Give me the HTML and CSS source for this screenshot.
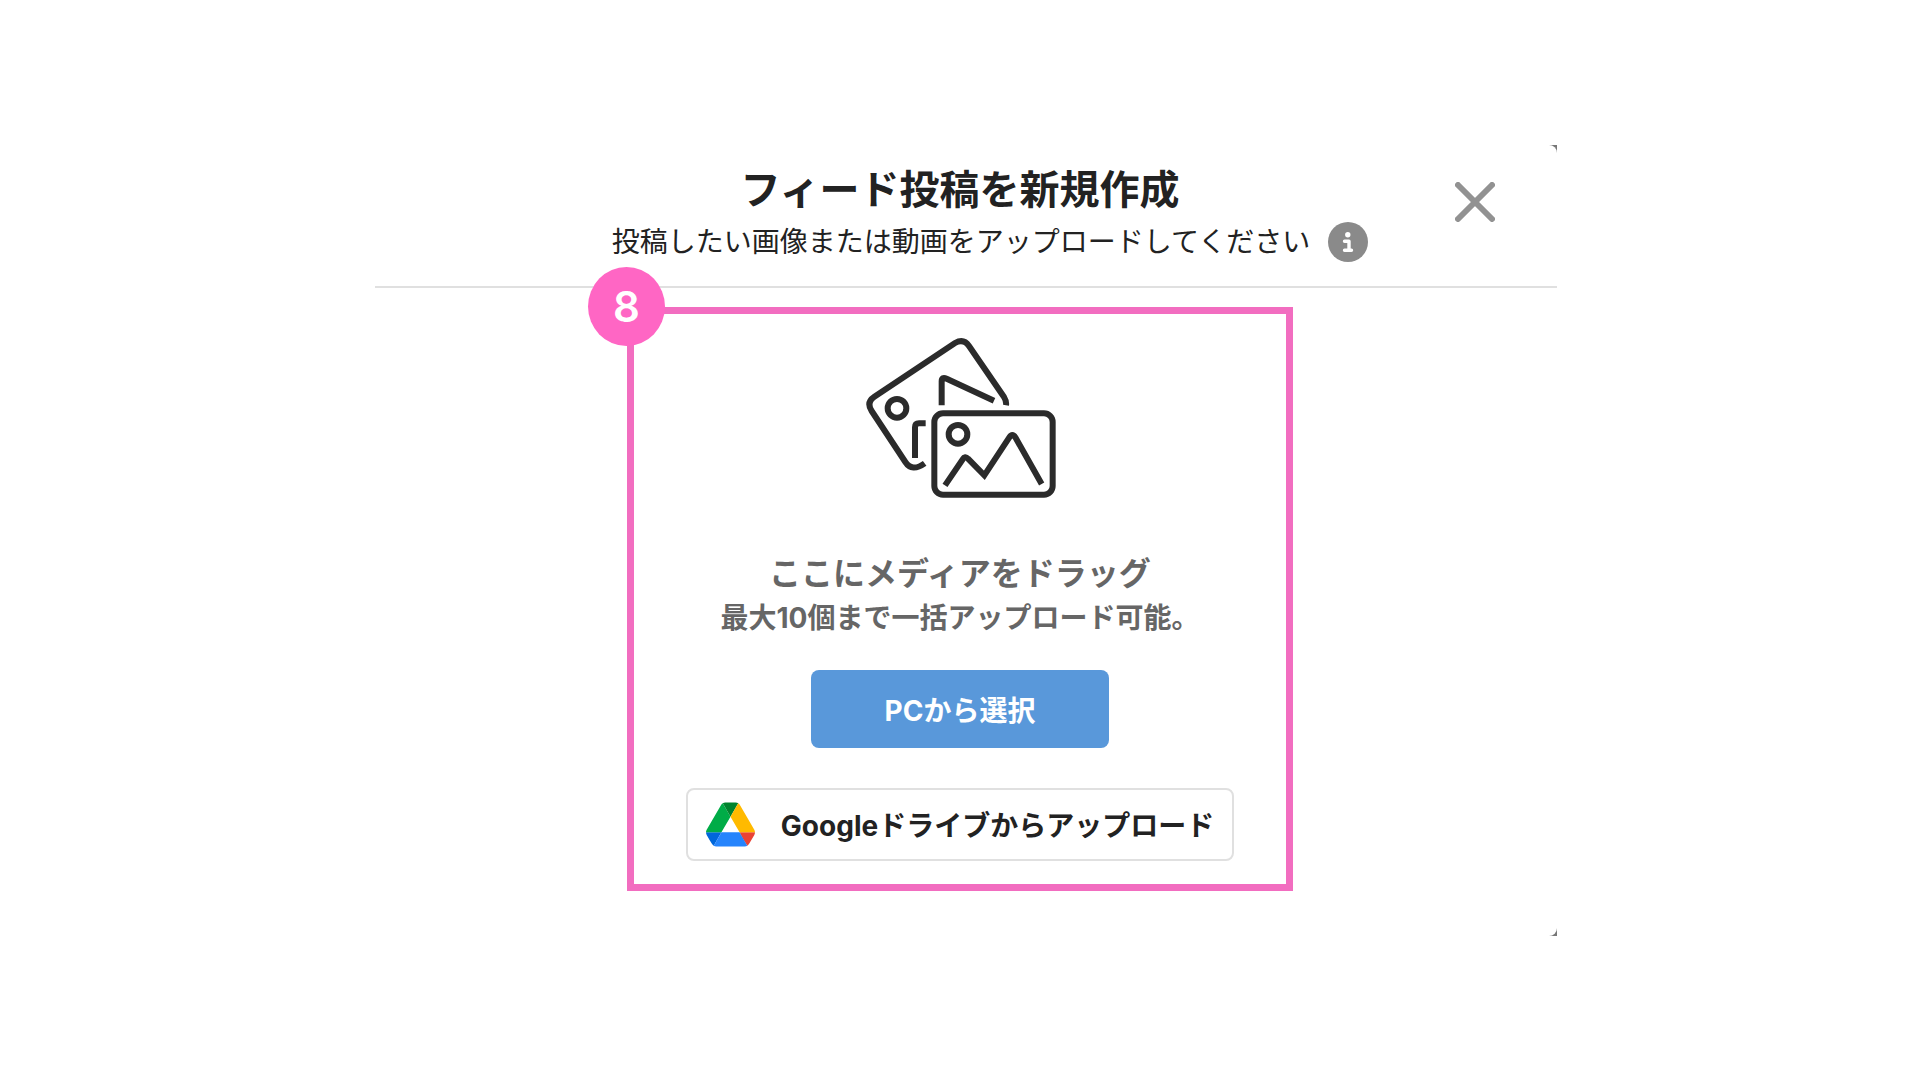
FILE: index.html
```html
<!DOCTYPE html>
<html lang="ja">
<head>
<meta charset="UTF-8">
<meta name="viewport" content="width=device-width, initial-scale=1.0">
<title>フィード投稿を新規作成</title>
<link rel="stylesheet" href="styles.css">
</head>
<body>

<div class="backdrop">
  <main class="modal">
    <header class="modal-header">
      <div class="heading">
        <h1>フィード投稿を新規作成</h1>
        <div class="lead">
          <p>投稿したい画像または動画をアップロードしてください</p>
          <button type="button" class="icon-button" aria-label="info">
            <svg width="40" height="40" viewBox="0 0 40 40">
              <circle cx="20" cy="20" r="20" fill="#8a8a8a"/>
              <circle cx="19.8" cy="12.8" r="2.7" fill="#fff"/>
              <path d="M16.5 19.2h4.5v8.8M16.5 28.2h7" fill="none" stroke="#fff" stroke-width="3.4" stroke-linecap="round" stroke-linejoin="round"/>
            </svg>
          </button>
        </div>
      </div>
      <button type="button" class="icon-button close" aria-label="close">
        <svg width="40" height="40" viewBox="0 0 40 40">
          <path d="M3 3l34 34M37 3L3 37" stroke="#929292" stroke-width="6" stroke-linecap="round"/>
        </svg>
      </button>
    </header>

    <div class="modal-body">
      <section class="dropzone">
        <span class="badge">8</span>
        <svg class="media-icon" viewBox="38 48 585 492" fill="none" stroke="#2b2b2b" stroke-width="18">
          <!-- back photo -->
          <path d="M470 256Q472 244 464 231L359 78Q343 54 317 69L75 230Q50 247 67 273L168 426Q188 457 226 430"/>
          <circle cx="143" cy="265" r="28"/>
          <path d="M277 256V184Q277 169 292 176L434 242"/>
          <path d="M197 414V322Q197 310 209 310H229"/>
          <!-- front photo -->
          <rect x="255" y="280" width="355" height="244" rx="26"/>
          <circle cx="326" cy="343" r="28"/>
          <path d="M287 496L340 418Q347 406 356 416L405 466L480 352Q489 338 498 352L577 492"/>
        </svg>
        <p class="drag-text">ここにメディアをドラッグ</p>
        <p class="limit-text">最大10個まで一括アップロード可能。</p>
        <button type="button" class="button primary">PCから選択</button>
        <button type="button" class="button drive">
          <svg width="49" height="45" viewBox="0 0 87.3 78">
            <path d="m6.6 66.85 3.85 6.65c.8 1.4 1.95 2.5 3.3 3.3l13.75-23.8h-27.5c0 1.55.4 3.1 1.2 4.5z" fill="#0066da"/>
            <path d="m43.65 25-13.75-23.8c-1.35.8-2.5 1.9-3.3 3.3l-25.4 44a9.06 9.06 0 0 0 -1.2 4.5h27.5z" fill="#00ac47"/>
            <path d="m73.55 76.8c1.35-.8 2.5-1.9 3.3-3.3l1.6-2.75 7.65-13.25c.8-1.4 1.2-2.95 1.2-4.5h-27.502l5.852 11.5z" fill="#ea4335"/>
            <path d="m43.65 25 13.75-23.8c-1.35-.8-2.9-1.2-4.5-1.2h-18.5c-1.6 0-3.15.45-4.5 1.2z" fill="#00832d"/>
            <path d="m59.8 53h-32.3l-13.75 23.8c1.35.8 2.9 1.2 4.5 1.2h50.8c1.6 0 3.15-.45 4.5-1.2z" fill="#2684fc"/>
            <path d="m73.4 26.5-12.7-22c-.8-1.4-1.95-2.5-3.3-3.3l-13.75 23.8 16.15 28h27.45c0-1.55-.4-3.1-1.2-4.5z" fill="#ffba00"/>
          </svg>
          <span>Googleドライブからアップロード</span>
        </button>
      </section>
    </div>
  </main>
</div>

</body>
</html>
```
FILE: styles.css
```css
* {
  box-sizing: border-box;
}

body {
  margin: 0;
  min-height: 100vh;
  display: flex;
  align-items: center;
  justify-content: center;
  padding-left: 12px;
  background: #fff;
  color: #222;
  font-family: Inter, "Noto Sans CJK JP", sans-serif;
}

h1, p {
  margin: 0;
}

button {
  font-family: inherit;
  cursor: pointer;
}

/* shows through at the rounded corners of the modal */
.backdrop {
  width: 62%;
  background: #777;
}

.modal {
  background: #fff;
  border-radius: 0 8px 8px 0;
  padding-bottom: 45px;
}

.modal-header {
  display: grid;
  grid-template-columns: 1fr auto 1fr;
  padding: 16px 62px 21px 50px;
  border-bottom: 2px solid #e0e0e0;
}

.heading {
  grid-column: 2;
  text-align: center;
}

.heading h1 {
  font-size: 40px;
  line-height: 58px;
}

.lead {
  display: flex;
  align-items: center;
  gap: 18px;
  height: 46px;
  margin-right: -60px;
  font-size: 28px;
  line-height: 46px;
  white-space: nowrap;
}

.icon-button {
  padding: 0;
  border: 0;
  background: none;
}

.icon-button svg {
  display: block;
}

.close {
  justify-self: end;
  align-self: start;
  margin-top: 21px;
}

.modal-body {
  display: flex;
  justify-content: center;
  padding: 19px 12px 0 0;
}

.dropzone {
  position: relative;
  display: flex;
  flex-direction: column;
  align-items: center;
  padding: 22px 52px 23px;
  border: 7px solid #f26dc0;
}

.badge {
  position: absolute;
  top: -47px;
  left: -46px;
  width: 77px;
  height: 79px;
  border-radius: 50%;
  background: #ff66c4;
  color: #fff;
  font-size: 42px;
  font-weight: 600;
  line-height: 79px;
  text-align: center;
}

.media-icon {
  width: 195px;
  height: 164px;
  margin-bottom: 52px;
}

.drag-text, .limit-text {
  color: #666;
  font-weight: 700;
  line-height: 44px;
}

.drag-text {
  font-size: 32px;
}

.limit-text {
  font-size: 28px;
}

.button {
  border-radius: 8px;
  font-size: 28px;
  font-weight: 700;
}

.primary {
  width: 298px;
  height: 78px;
  margin: 30px 0 40px;
  border: 0;
  background: #5998da;
  color: #fff;
}

.drive {
  display: flex;
  align-items: center;
  gap: 26px;
  height: 73px;
  padding: 0 18px;
  border: 2px solid #e0e0e0;
  background: #fff;
  color: #222;
}
```
